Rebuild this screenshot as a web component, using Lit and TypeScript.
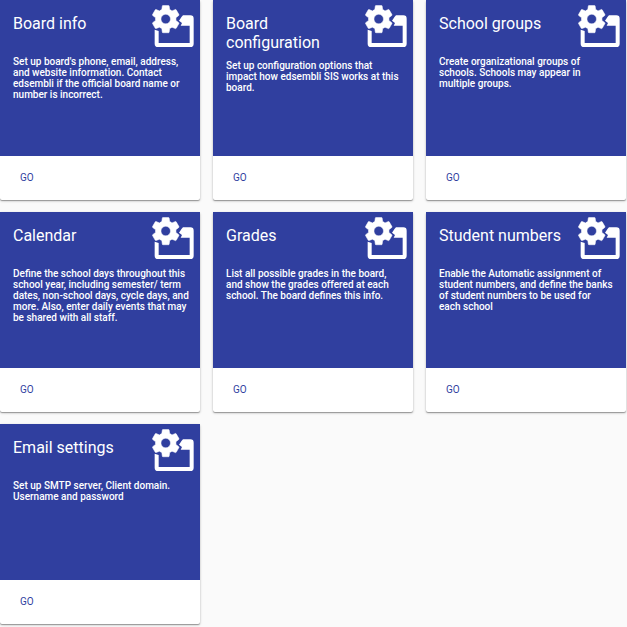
import { LitElement, html, css } from "lit";
import { customElement, property } from "lit/decorators.js";

interface Setting {
  title: string;
  description: string;
}

const SETTINGS: Setting[] = [
  { title: "Board info", description: "Set up board's phone, email, address, and website information. Contact edsembli if the official board name or number is incorrect." },
  { title: "Board configuration", description: "Set up configuration options that impact how edsembli SIS works at this board." },
  { title: "School groups", description: "Create organizational groups of schools. Schools may appear in multiple groups." },
  { title: "Calendar", description: "Define the school days throughout this school year, including semester/ term dates, non-school days, cycle days, and more. Also, enter daily events that may be shared with all staff." },
  { title: "Grades", description: "List all possible grades in the board, and show the grades offered at each school. The board defines this info." },
  { title: "Student numbers", description: "Enable the Automatic assignment of student numbers, and define the banks of student numbers to be used for each\u00a0school" },
  { title: "Email settings", description: "Set up SMTP server, Client domain. Username and password" },
];

@customElement("setting-card")
export class SettingCard extends LitElement {
  @property() heading = "";
  @property() description = "";

  static styles = css`
    :host {
      display: flex;
      flex-direction: column;
      background: #fff;
      border-radius: 2px;
      box-shadow: 0 1px 1px rgba(0, 0, 0, 0.3), 0 1px 3px rgba(0, 0, 0, 0.2);
    }
    .head {
      flex: 1;
      box-sizing: border-box;
      min-height: 156px;
      padding: 14px 10px 12px 13px;
      background: #303f9f;
      color: #fff;
    }
    .top {
      display: flex;
      justify-content: space-between;
      gap: 8px;
      min-height: 34px;
      margin-bottom: 8px;
    }
    h2 {
      margin: 0;
      font-size: 16px;
      line-height: 19px;
      font-weight: 400;
    }
    .icon {
      flex: none;
      width: 42px;
      height: 42px;
      margin: -9px -4px -9px 0;
      fill: #fff;
    }
    p {
      margin: 0;
      font-size: 10px;
      line-height: 11px;
      font-weight: 500;
    }
    .actions {
      display: flex;
      align-items: center;
      height: 44px;
      padding: 0 12px;
    }
    button {
      border: 0;
      padding: 4px 8px;
      background: none;
      color: #303f9f;
      font: 400 10px/16px Roboto, sans-serif;
      text-transform: uppercase;
      cursor: pointer;
    }
  `;

  render() {
    return html`
      <div class="head">
        <div class="top">
          <h2>${this.heading}</h2>
          <svg class="icon" viewBox="36 15 126 126" aria-hidden="true">
            <path transform="translate(28 8) scale(4.1)" stroke="#fff" stroke-width=".4" d="M19.43 12.98c.04-.32.07-.64.07-.98s-.03-.66-.07-.98l2.11-1.65c.19-.15.24-.42.12-.64l-2-3.46c-.12-.22-.39-.3-.61-.22l-2.49 1c-.52-.4-1.08-.73-1.69-.98l-.38-2.65C14.46 2.18 14.25 2 14 2h-4c-.25 0-.46.18-.49.42l-.38 2.65c-.61.25-1.17.59-1.69.98l-2.49-1c-.23-.09-.49 0-.61.22l-2 3.46c-.13.22-.07.49.12.64l2.11 1.65c-.04.32-.07.65-.07.98s.03.66.07.98l-2.11 1.65c-.19.15-.24.42-.12.64l2 3.46c.12.22.39.3.61.22l2.49-1c.52.4 1.08.73 1.69.98l.38 2.65c.03.24.24.42.49.42h4c.25 0 .46-.18.49-.42l.38-2.65c.61-.25 1.17-.59 1.69-.98l2.49 1c.23.09.49 0 .61-.22l2-3.46c.12-.22.07-.49-.12-.64l-2.11-1.65zM12 15.5c-1.93 0-3.5-1.57-3.5-3.5s1.57-3.5 3.5-3.5 3.5 1.57 3.5 3.5-1.57 3.5-3.5 3.5z"/>
            <path d="M129 46h22q10 0 10 10v75q0 10-10 10H54q-10 0-10-10V89l12 4v36h93V77h-27l4-8-9-7 8-12z"/>
          </svg>
        </div>
        <p>${this.description}</p>
      </div>
      <div class="actions">
        <button type="button" aria-label=${`Go to ${this.heading}`}>Go</button>
      </div>
    `;
  }
}

@customElement("app-root")
export class AppRoot extends LitElement {
  static styles = css`
    :host {
      display: block;
      box-sizing: border-box;
      min-height: 100vh;
      padding-right: 1px;
      overflow: hidden;
      background: #fafafa;
      font-family: Roboto, sans-serif;
    }
    .grid {
      display: grid;
      grid-template-columns: repeat(3, 1fr);
      gap: 12px 13px;
    }
  `;

  render() {
    return html`
      <main class="grid">
        ${SETTINGS.map((s) => html`<setting-card .heading=${s.title} .description=${s.description}></setting-card>`)}
      </main>
    `;
  }
}
